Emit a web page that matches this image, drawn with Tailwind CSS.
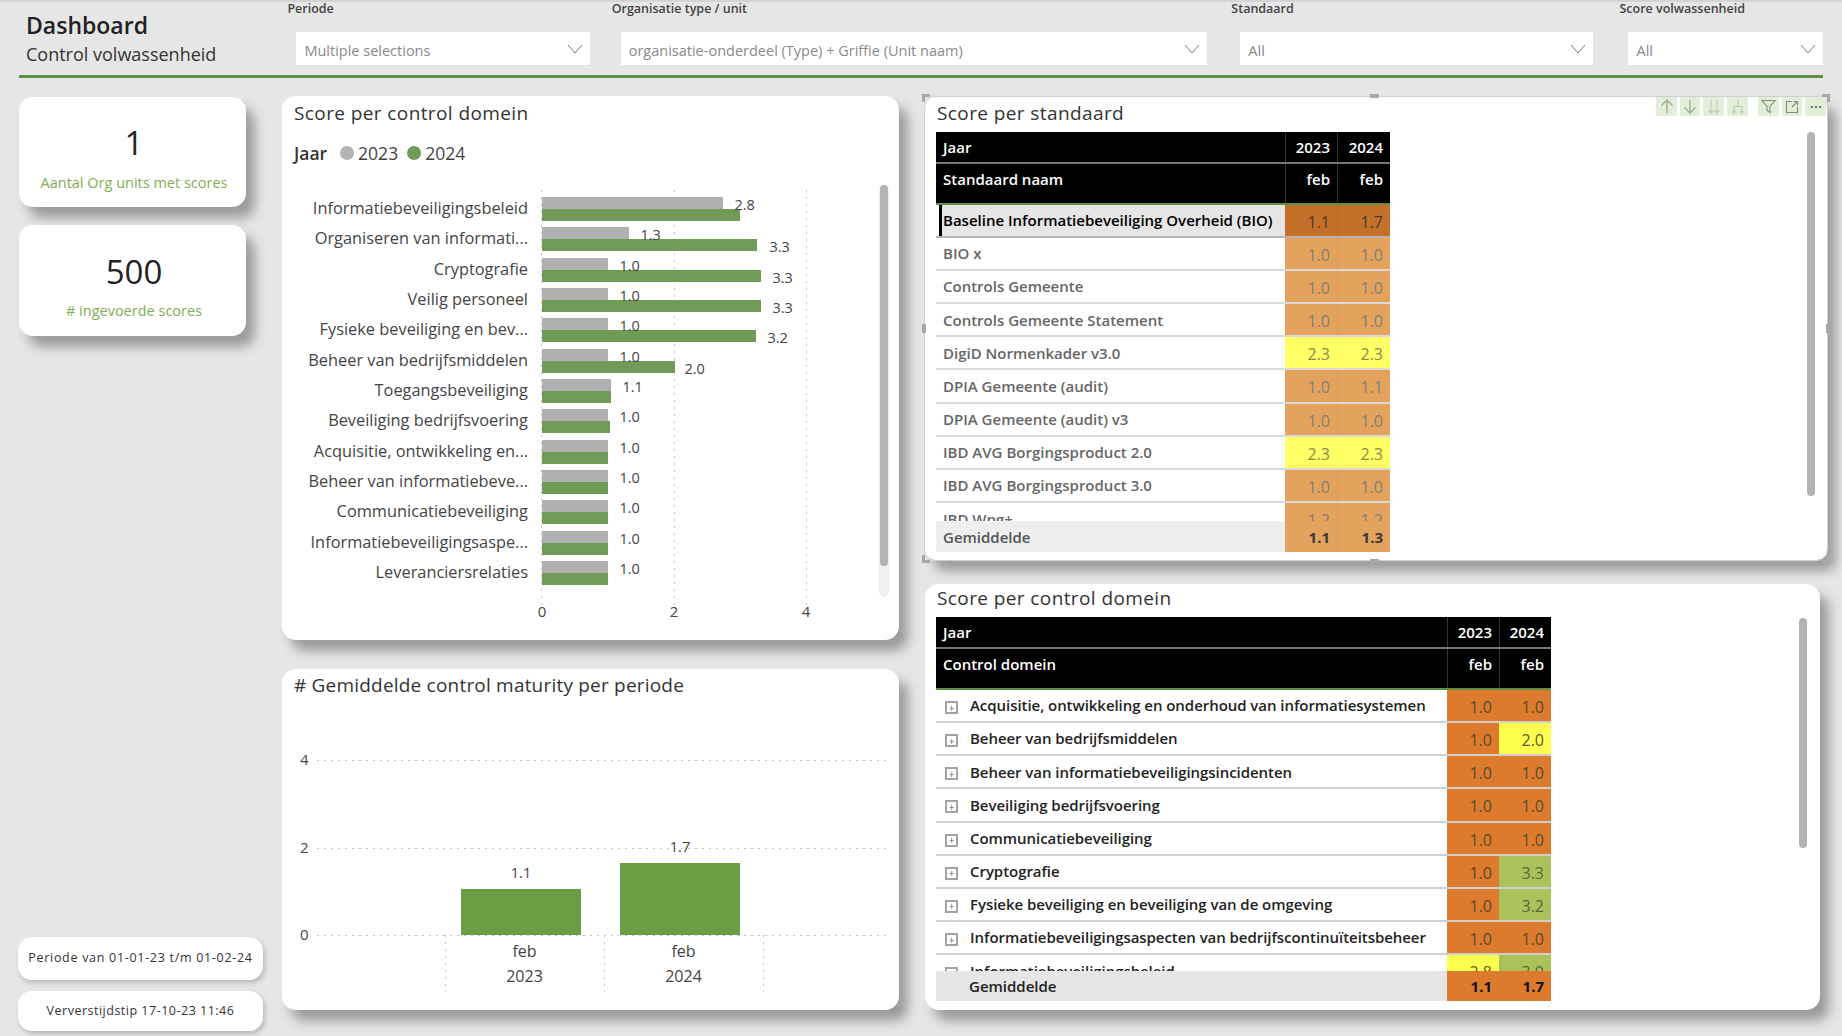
<!DOCTYPE html>
<html lang="nl">
<head>
<meta charset="utf-8">
<title>Dashboard Control volwassenheid</title>
<script src="https://cdn.jsdelivr.net/npm/@tailwindcss/browser@4"></script>
</head>
<body class="w-[1842px] h-[1036px] overflow-hidden bg-[#e6e6e6] shadow-[inset_0_2px_0_#d4d4d4] font-['Open_Sans',sans-serif] text-[#333]">

<!-- header -->
<header class="h-[78px] mx-[19px] border-b-[3px] border-[#5f8f45] flex relative">
  <div class="w-[269px] pl-[7px] pt-[11px]">
    <div class="text-[23px] leading-[28px] font-semibold text-[#222]">Dashboard</div>
    <div class="mt-[2px] text-[18px] leading-[26px] text-[#333]">Control volwassenheid</div>
  </div>
  <div class="w-[303px] flex flex-col">
    <div class="text-[12.5px] leading-[18px] font-semibold text-[#444]">Periode</div>
    <div class="mt-[14px] ml-[9px] h-[33px] bg-white flex items-center justify-between pl-[8px] pr-[7px] text-[14.5px] text-[#8a8a8a]"><span class="pt-[5px]">Multiple selections</span>
      <svg class="w-[16px] h-[10px]" viewBox="0 0 16 10" fill="none" stroke="#777" stroke-width="1"><path d="M1 1l7 8 7-8"/></svg></div>
  </div>
  <div class="w-[597px] ml-[22px] flex flex-col">
    <div class="text-[12.5px] leading-[18px] font-semibold text-[#444]">Organisatie type / unit</div>
    <div class="mt-[14px] ml-[9px] h-[33px] bg-white flex items-center justify-between pl-[8px] pr-[7px] text-[14.5px] text-[#8a8a8a]"><span class="pt-[5px]">organisatie-onderdeel (Type) + Griffie (Unit naam)</span>
      <svg class="w-[16px] h-[10px]" viewBox="0 0 16 10" fill="none" stroke="#777" stroke-width="1"><path d="M1 1l7 8 7-8"/></svg></div>
  </div>
  <div class="w-[363px] ml-[24px] flex flex-col">
    <div class="text-[12.5px] leading-[18px] font-semibold text-[#444]">Standaard</div>
    <div class="mt-[14px] ml-[9px] h-[33px] bg-white flex items-center justify-between pl-[8px] pr-[7px] text-[14.5px] text-[#8a8a8a]"><span class="pt-[5px]">All</span>
      <svg class="w-[16px] h-[10px]" viewBox="0 0 16 10" fill="none" stroke="#777" stroke-width="1"><path d="M1 1l7 8 7-8"/></svg></div>
  </div>
  <div class="w-[204px] ml-[26px] flex flex-col">
    <div class="text-[12.5px] leading-[18px] font-semibold text-[#444] whitespace-nowrap">Score volwassenheid</div>
    <div class="mt-[14px] ml-[9px] h-[33px] bg-white flex items-center justify-between pl-[8px] pr-[7px] text-[14.5px] text-[#8a8a8a]"><span class="pt-[5px]">All</span>
      <svg class="w-[16px] h-[10px]" viewBox="0 0 16 10" fill="none" stroke="#777" stroke-width="1"><path d="M1 1l7 8 7-8"/></svg></div>
  </div>
</header>

<main class="flex pt-[18px] h-[958px]">

  <!-- left column -->
  <div class="ml-[18px] w-[245px] flex flex-col pb-[5px]">
    <div class="mt-[1px] ml-[1px] w-[227px] h-[110px] bg-white rounded-[14px] shadow-[9px_11px_12px_rgba(0,0,0,0.33)] flex flex-col items-center pt-[24px] pl-[3px]">
      <div class="text-[33px] leading-[44px] font-medium text-[#222]">1</div>
      <div class="mt-[8px] text-[14.5px] leading-[20px] text-[#7fae55]">Aantal Org units met scores</div>
    </div>
    <div class="mt-[18px] ml-[1px] w-[227px] h-[111px] bg-white rounded-[14px] shadow-[9px_11px_12px_rgba(0,0,0,0.33)] flex flex-col items-center pt-[25px] pl-[3px]">
      <div class="text-[33px] leading-[44px] font-medium text-[#222]">500</div>
      <div class="mt-[7px] text-[14.5px] leading-[20px] text-[#7fae55]"># ingevoerde scores</div>
    </div>
    <div class="mt-auto h-[43px] bg-white rounded-[14px] shadow-[2px_3px_5px_rgba(0,0,0,0.2)] flex items-center justify-center text-[12.5px] tracking-[0.7px] text-[#333] whitespace-nowrap">Periode van 01-01-23 t/m 01-02-24</div>
    <div class="mt-[11px] h-[40px] bg-white rounded-[14px] shadow-[2px_3px_5px_rgba(0,0,0,0.2)] flex items-center justify-center text-[12.5px] tracking-[0.5px] text-[#333]">Ververstijdstip 17-10-23 11:46</div>
  </div>

  <!-- middle column -->
  <div class="ml-[19px] w-[617px] flex flex-col">
    <section class="relative h-[544px] bg-white rounded-[14px] shadow-[9px_11px_12px_rgba(0,0,0,0.33)]">
      <h2 class="pl-[12px] pt-[4px] text-[19px] leading-[26px] tracking-[0.4px] text-[#333]">Score per control domein</h2>
      <div class="mt-[14px] pl-[12px] flex items-center h-[26px] text-[17.5px] text-[#444]">
        <span class="font-semibold text-[#333]">Jaar</span>
        <span class="ml-[13px] w-[14px] h-[14px] rounded-full bg-[#b3b3b3]"></span><span class="ml-[4px]">2023</span>
        <span class="ml-[9px] w-[14px] h-[14px] rounded-full bg-[#6f9b57]"></span><span class="ml-[4px]">2024</span>
      </div>

      <div class="absolute left-[259px] top-[94px] h-[420px] w-[1px] bg-[repeating-linear-gradient(to_bottom,#c4c4c4_0,#c4c4c4_2px,transparent_2px,transparent_7px)]"></div>
      <div class="absolute left-[392px] top-[94px] h-[420px] w-[1px] bg-[repeating-linear-gradient(to_bottom,#c4c4c4_0,#c4c4c4_2px,transparent_2px,transparent_7px)]"></div>
      <div class="absolute left-[524px] top-[94px] h-[420px] w-[1px] bg-[repeating-linear-gradient(to_bottom,#c4c4c4_0,#c4c4c4_2px,transparent_2px,transparent_7px)]"></div>

      <div class="relative mt-[27px] text-[16.35px] text-[#444]">
        <div class="h-[30.35px] flex items-center"><div class="w-[246px] text-right whitespace-nowrap">Informatiebeveiligingsbeleid</div>
          <div class="relative self-start mt-[4px] ml-[13.5px] h-[23px] w-[300px]"><div class="h-[12px] w-[181px] bg-[#b0b0b0]"></div><div class="h-[12px] w-[198px] bg-[#6f9b57]"></div><span class="absolute left-[193px] top-[-3px] text-[14.5px]">2.8</span></div></div>
        <div class="h-[30.35px] flex items-center"><div class="w-[246px] text-right whitespace-nowrap">Organiseren van informati...</div>
          <div class="relative self-start mt-[4px] ml-[13.5px] h-[23px] w-[300px]"><div class="h-[12px] w-[87px] bg-[#b0b0b0]"></div><div class="h-[12px] w-[215px] bg-[#6f9b57]"></div><span class="absolute left-[99px] top-[-3px] text-[14.5px]">1.3</span><span class="absolute left-[228px] top-[9px] text-[14.5px]">3.3</span></div></div>
        <div class="h-[30.35px] flex items-center"><div class="w-[246px] text-right whitespace-nowrap">Cryptografie</div>
          <div class="relative self-start mt-[4px] ml-[13.5px] h-[23px] w-[300px]"><div class="h-[12px] w-[66px] bg-[#b0b0b0]"></div><div class="h-[12px] w-[219px] bg-[#6f9b57]"></div><span class="absolute left-[78px] top-[-3px] text-[14.5px]">1.0</span><span class="absolute left-[231px] top-[9px] text-[14.5px]">3.3</span></div></div>
        <div class="h-[30.35px] flex items-center"><div class="w-[246px] text-right whitespace-nowrap">Veilig personeel</div>
          <div class="relative self-start mt-[4px] ml-[13.5px] h-[23px] w-[300px]"><div class="h-[12px] w-[66px] bg-[#b0b0b0]"></div><div class="h-[12px] w-[219px] bg-[#6f9b57]"></div><span class="absolute left-[78px] top-[-3px] text-[14.5px]">1.0</span><span class="absolute left-[231px] top-[9px] text-[14.5px]">3.3</span></div></div>
        <div class="h-[30.35px] flex items-center"><div class="w-[246px] text-right whitespace-nowrap">Fysieke beveiliging en bev...</div>
          <div class="relative self-start mt-[4px] ml-[13.5px] h-[23px] w-[300px]"><div class="h-[12px] w-[66px] bg-[#b0b0b0]"></div><div class="h-[12px] w-[214px] bg-[#6f9b57]"></div><span class="absolute left-[78px] top-[-3px] text-[14.5px]">1.0</span><span class="absolute left-[226px] top-[9px] text-[14.5px]">3.2</span></div></div>
        <div class="h-[30.35px] flex items-center"><div class="w-[246px] text-right whitespace-nowrap">Beheer van bedrijfsmiddelen</div>
          <div class="relative self-start mt-[4px] ml-[13.5px] h-[23px] w-[300px]"><div class="h-[12px] w-[66px] bg-[#b0b0b0]"></div><div class="h-[12px] w-[133px] bg-[#6f9b57]"></div><span class="absolute left-[78px] top-[-3px] text-[14.5px]">1.0</span><span class="absolute left-[143px] top-[9px] text-[14.5px]">2.0</span></div></div>
        <div class="h-[30.35px] flex items-center"><div class="w-[246px] text-right whitespace-nowrap">Toegangsbeveiliging</div>
          <div class="relative self-start mt-[4px] ml-[13.5px] h-[23px] w-[300px]"><div class="h-[12px] w-[69px] bg-[#b0b0b0]"></div><div class="h-[12px] w-[69px] bg-[#6f9b57]"></div><span class="absolute left-[81px] top-[-3px] text-[14.5px]">1.1</span></div></div>
        <div class="h-[30.35px] flex items-center"><div class="w-[246px] text-right whitespace-nowrap">Beveiliging bedrijfsvoering</div>
          <div class="relative self-start mt-[4px] ml-[13.5px] h-[23px] w-[300px]"><div class="h-[12px] w-[66px] bg-[#b0b0b0]"></div><div class="h-[12px] w-[68px] bg-[#6f9b57]"></div><span class="absolute left-[78px] top-[-3px] text-[14.5px]">1.0</span></div></div>
        <div class="h-[30.35px] flex items-center"><div class="w-[246px] text-right whitespace-nowrap">Acquisitie, ontwikkeling en...</div>
          <div class="relative self-start mt-[4px] ml-[13.5px] h-[23px] w-[300px]"><div class="h-[12px] w-[66px] bg-[#b0b0b0]"></div><div class="h-[12px] w-[66px] bg-[#6f9b57]"></div><span class="absolute left-[78px] top-[-3px] text-[14.5px]">1.0</span></div></div>
        <div class="h-[30.35px] flex items-center"><div class="w-[246px] text-right whitespace-nowrap">Beheer van informatiebeve...</div>
          <div class="relative self-start mt-[4px] ml-[13.5px] h-[23px] w-[300px]"><div class="h-[12px] w-[66px] bg-[#b0b0b0]"></div><div class="h-[12px] w-[66px] bg-[#6f9b57]"></div><span class="absolute left-[78px] top-[-3px] text-[14.5px]">1.0</span></div></div>
        <div class="h-[30.35px] flex items-center"><div class="w-[246px] text-right whitespace-nowrap">Communicatiebeveiliging</div>
          <div class="relative self-start mt-[4px] ml-[13.5px] h-[23px] w-[300px]"><div class="h-[12px] w-[66px] bg-[#b0b0b0]"></div><div class="h-[12px] w-[66px] bg-[#6f9b57]"></div><span class="absolute left-[78px] top-[-3px] text-[14.5px]">1.0</span></div></div>
        <div class="h-[30.35px] flex items-center"><div class="w-[246px] text-right whitespace-nowrap">Informatiebeveiligingsaspe...</div>
          <div class="relative self-start mt-[4px] ml-[13.5px] h-[23px] w-[300px]"><div class="h-[12px] w-[66px] bg-[#b0b0b0]"></div><div class="h-[12px] w-[66px] bg-[#6f9b57]"></div><span class="absolute left-[78px] top-[-3px] text-[14.5px]">1.0</span></div></div>
        <div class="h-[30.35px] flex items-center"><div class="w-[246px] text-right whitespace-nowrap">Leveranciersrelaties</div>
          <div class="relative self-start mt-[4px] ml-[13.5px] h-[23px] w-[300px]"><div class="h-[12px] w-[66px] bg-[#b0b0b0]"></div><div class="h-[12px] w-[66px] bg-[#6f9b57]"></div><span class="absolute left-[78px] top-[-3px] text-[14.5px]">1.0</span></div></div>
      </div>

      <div class="absolute left-[254px] top-[504px] w-[12px] text-center text-[15px] text-[#444]">0</div>
      <div class="absolute left-[386px] top-[504px] w-[12px] text-center text-[15px] text-[#444]">2</div>
      <div class="absolute left-[518px] top-[504px] w-[12px] text-center text-[15px] text-[#444]">4</div>

      <div class="absolute left-[597px] top-[89px] w-[10px] h-[412px] rounded-full bg-[#f0f0f0]">
        <div class="h-[381px] rounded-full bg-[#b3b3b3] w-[8px] mx-auto"></div>
      </div>
    </section>

    <section class="relative mt-[29px] h-[341px] bg-white rounded-[14px] shadow-[9px_11px_12px_rgba(0,0,0,0.33)]">
      <h2 class="pl-[12px] pt-[3px] text-[19px] leading-[26px] tracking-[0.2px] text-[#333]"># Gemiddelde control maturity per periode</h2>

      <div class="absolute left-[18px] top-[79px] text-[15px] text-[#444]">4</div>
      <div class="absolute left-[18px] top-[167px] text-[15px] text-[#444]">2</div>
      <div class="absolute left-[18px] top-[254px] text-[15px] text-[#444]">0</div>
      <div class="absolute left-[35px] right-[9px] top-[91px] h-[1px] bg-[repeating-linear-gradient(to_right,#c4c4c4_0,#c4c4c4_2px,transparent_2px,transparent_7px)]"></div>
      <div class="absolute left-[35px] right-[9px] top-[179px] h-[1px] bg-[repeating-linear-gradient(to_right,#c4c4c4_0,#c4c4c4_2px,transparent_2px,transparent_7px)]"></div>
      <div class="absolute left-[35px] right-[9px] top-[266px] h-[1px] bg-[repeating-linear-gradient(to_right,#c4c4c4_0,#c4c4c4_2px,transparent_2px,transparent_7px)]"></div>
      <div class="absolute left-[163px] top-[266px] h-[57px] w-[1px] bg-[repeating-linear-gradient(to_bottom,#c4c4c4_0,#c4c4c4_2px,transparent_2px,transparent_7px)]"></div>
      <div class="absolute left-[322px] top-[266px] h-[57px] w-[1px] bg-[repeating-linear-gradient(to_bottom,#c4c4c4_0,#c4c4c4_2px,transparent_2px,transparent_7px)]"></div>
      <div class="absolute left-[481px] top-[266px] h-[57px] w-[1px] bg-[repeating-linear-gradient(to_bottom,#c4c4c4_0,#c4c4c4_2px,transparent_2px,transparent_7px)]"></div>

      <div class="absolute left-[179px] top-[165px] h-[101px] flex items-end gap-[39px] text-center text-[14.5px] text-[#444]">
        <div class="w-[120px]"><div class="leading-[20px] mb-[6px]">1.1</div><div class="h-[46px] bg-[#699e45]"></div></div>
        <div class="w-[120px]"><div class="leading-[20px] mb-[6px]">1.7</div><div class="h-[72px] bg-[#699e45]"></div></div>
      </div>

      <div class="absolute left-[163px] top-[270px] flex text-center text-[16px] leading-[25px] text-[#444]">
        <div class="w-[159px]">feb<br>2023</div>
        <div class="w-[159px]">feb<br>2024</div>
      </div>
    </section>
  </div>

  <!-- right column -->
  <div class="ml-[26px] w-[902px] flex flex-col">
    <section class="relative mt-[1px] h-[463px] bg-white rounded-[10px] shadow-[9px_11px_12px_rgba(0,0,0,0.33)] outline outline-[#d0d0d0]">
      <span class="absolute left-[-3px] top-[-3px] w-[8px] h-[8px] border-l-[3px] border-t-[3px] border-[#a8a8a8]"></span>
      <span class="absolute right-[-3px] top-[-3px] w-[8px] h-[8px] border-r-[3px] border-t-[3px] border-[#a8a8a8]"></span>
      <span class="absolute left-[-3px] bottom-[-3px] w-[8px] h-[8px] border-l-[3px] border-b-[3px] border-[#a8a8a8]"></span>
      <span class="absolute right-[-3px] bottom-[-3px] w-[8px] h-[8px] border-r-[3px] border-b-[3px] border-[#a8a8a8]"></span>
      <span class="absolute left-[445px] top-[-3px] w-[9px] h-[4px] bg-[#a8a8a8]"></span>
      <span class="absolute left-[445px] bottom-[-3px] w-[9px] h-[4px] bg-[#a8a8a8]"></span>
      <span class="absolute left-[-3px] top-[227px] w-[4px] h-[9px] bg-[#a8a8a8]"></span>
      <span class="absolute right-[-3px] top-[227px] w-[4px] h-[9px] bg-[#a8a8a8]"></span>

      <!-- visual toolbar -->
      <div class="absolute right-[1px] top-0 flex h-[19px]">
        <span class="w-[21px] mr-[3px] bg-[#e2eed9] flex items-center justify-center"><svg class="w-[14px] h-[15px]" viewBox="0 0 14 15" fill="none" stroke="#9aae8e" stroke-width="1.3"><path d="M7 14V1M1.5 6.5L7 1l5.5 5.5"/></svg></span>
        <span class="w-[20px] mr-[3px] bg-[#e2eed9] flex items-center justify-center"><svg class="w-[14px] h-[15px]" viewBox="0 0 14 15" fill="none" stroke="#9aae8e" stroke-width="1.3"><path d="M7 1v13M1.5 8.5L7 14l5.5-5.5"/></svg></span>
        <span class="w-[21px] mr-[3px] bg-[#e2eed9] flex items-center justify-center"><svg class="w-[14px] h-[15px]" viewBox="0 0 14 15" fill="none" stroke="#bccdb2" stroke-width="1.2"><path d="M4 1v13M1.5 11.5L4 14l2.5-2.5M10 1v13M7.5 11.5L10 14l2.5-2.5"/></svg></span>
        <span class="w-[21px] mr-[10px] bg-[#e2eed9] flex items-center justify-center"><svg class="w-[14px] h-[15px]" viewBox="0 0 14 15" fill="none" stroke="#bccdb2" stroke-width="1.2"><path d="M7 1v6M3 14V7.5h8V14M1.5 12L3 14l1.5-2M9.5 12l1.5 2 1.5-2"/></svg></span>
        <span class="w-[21px] mr-[3px] bg-[#e2eed9] flex items-center justify-center"><svg class="w-[15px] h-[15px]" viewBox="0 0 15 15" fill="none" stroke="#808c78" stroke-width="1.1"><path d="M1 1.5h13L9 7.5v6l-3-2v-4z"/></svg></span>
        <span class="w-[20px] mr-[3px] bg-[#e2eed9] flex items-center justify-center"><svg class="w-[14px] h-[14px]" viewBox="0 0 14 14" fill="none" stroke="#808c78" stroke-width="1.1"><path d="M7 1.5H1.5v11h11V7M8.5 1.5h4v4M12.5 1.5L7 7"/></svg></span>
        <span class="w-[21px] bg-[#e2eed9] flex items-center justify-center gap-[2px]"><i class="w-[2px] h-[2px] bg-[#6f7a68]"></i><i class="w-[2px] h-[2px] bg-[#6f7a68]"></i><i class="w-[2px] h-[2px] bg-[#6f7a68]"></i></span>
      </div>

      <h2 class="pl-[12px] pt-[3px] text-[19px] leading-[26px] tracking-[0.4px] text-[#333]">Score per standaard</h2>

      <div class="mt-[6px] ml-[11px] w-[454px] text-[15px]">
        <div class="flex h-[30px] bg-black text-white font-semibold items-center">
          <div class="w-[349px] pl-[7px]">Jaar</div>
          <div class="w-[52px] h-full flex items-center justify-end pr-[7px] border-l border-[#333]">2023</div>
          <div class="w-[53px] h-full flex items-center justify-end pr-[7px] border-l border-[#333]">2024</div>
        </div>
        <div class="h-[2px] bg-[#777]"></div>
        <div class="flex h-[41px] bg-black text-white font-semibold border-b-2 border-[#5f8f45]">
          <div class="w-[349px] pl-[7px] pt-[4px]">Standaard naam</div>
          <div class="w-[52px] pt-[4px] text-right pr-[7px] border-l border-[#333]">feb</div>
          <div class="w-[53px] pt-[4px] text-right pr-[7px] border-l border-[#333]">feb</div>
        </div>
        <div class="h-[316px] overflow-hidden text-[#666] font-semibold">
          <div class="flex h-[33.1px] border-b-2 border-[#b5b5b5]">
            <div class="w-[349px] bg-[#e6e6e6] border-l-[3px] border-black ml-[3px] pl-[1px] flex items-center text-black whitespace-nowrap">Baseline Informatiebeveiliging Overheid (BIO)</div>
            <div class="w-[52px] -ml-[3px] bg-[#c4702a] text-[#4a3a2a] font-normal text-[16px] text-right pr-[7px] pt-[5px]">1.1</div>
            <div class="w-[53px] bg-[#c4702a] text-[#4a3a2a] font-normal text-[16px] text-right pr-[7px] pt-[5px] border-l border-[#b86a2a]">1.7</div>
          </div>
          <div class="flex h-[33.1px] border-b-2 border-[#d9d9d9]"><div class="w-[349px] pl-[7px] flex items-center">BIO x</div><div class="w-[52px] bg-[#e3a35d] text-[#857f73] font-normal text-[16px] text-right pr-[7px] pt-[5px]">1.0</div><div class="w-[53px] bg-[#e3a35d] text-[#857f73] font-normal text-[16px] text-right pr-[7px] pt-[5px] border-l border-[#d99a58]">1.0</div></div>
          <div class="flex h-[33.1px] border-b-2 border-[#d9d9d9]"><div class="w-[349px] pl-[7px] flex items-center">Controls Gemeente</div><div class="w-[52px] bg-[#e3a35d] text-[#857f73] font-normal text-[16px] text-right pr-[7px] pt-[5px]">1.0</div><div class="w-[53px] bg-[#e3a35d] text-[#857f73] font-normal text-[16px] text-right pr-[7px] pt-[5px] border-l border-[#d99a58]">1.0</div></div>
          <div class="flex h-[33.1px] border-b-2 border-[#d9d9d9]"><div class="w-[349px] pl-[7px] flex items-center">Controls Gemeente Statement</div><div class="w-[52px] bg-[#e3a35d] text-[#857f73] font-normal text-[16px] text-right pr-[7px] pt-[5px]">1.0</div><div class="w-[53px] bg-[#e3a35d] text-[#857f73] font-normal text-[16px] text-right pr-[7px] pt-[5px] border-l border-[#d99a58]">1.0</div></div>
          <div class="flex h-[33.1px] border-b-2 border-[#d9d9d9]"><div class="w-[349px] pl-[7px] flex items-center">DigiD Normenkader v3.0</div><div class="w-[52px] bg-[#ffff66] text-[#8c8c4a] font-normal text-[16px] text-right pr-[7px] pt-[5px]">2.3</div><div class="w-[53px] bg-[#ffff66] text-[#8c8c4a] font-normal text-[16px] text-right pr-[7px] pt-[5px]">2.3</div></div>
          <div class="flex h-[33.1px] border-b-2 border-[#d9d9d9]"><div class="w-[349px] pl-[7px] flex items-center">DPIA Gemeente (audit)</div><div class="w-[52px] bg-[#e3a35d] text-[#857f73] font-normal text-[16px] text-right pr-[7px] pt-[5px]">1.0</div><div class="w-[53px] bg-[#e3a35d] text-[#857f73] font-normal text-[16px] text-right pr-[7px] pt-[5px] border-l border-[#d99a58]">1.1</div></div>
          <div class="flex h-[33.1px] border-b-2 border-[#d9d9d9]"><div class="w-[349px] pl-[7px] flex items-center">DPIA Gemeente (audit) v3</div><div class="w-[52px] bg-[#e3a35d] text-[#857f73] font-normal text-[16px] text-right pr-[7px] pt-[5px]">1.0</div><div class="w-[53px] bg-[#e3a35d] text-[#857f73] font-normal text-[16px] text-right pr-[7px] pt-[5px] border-l border-[#d99a58]">1.0</div></div>
          <div class="flex h-[33.1px] border-b-2 border-[#d9d9d9]"><div class="w-[349px] pl-[7px] flex items-center">IBD AVG Borgingsproduct 2.0</div><div class="w-[52px] bg-[#ffff66] text-[#8c8c4a] font-normal text-[16px] text-right pr-[7px] pt-[5px]">2.3</div><div class="w-[53px] bg-[#ffff66] text-[#8c8c4a] font-normal text-[16px] text-right pr-[7px] pt-[5px]">2.3</div></div>
          <div class="flex h-[33.1px] border-b-2 border-[#d9d9d9]"><div class="w-[349px] pl-[7px] flex items-center">IBD AVG Borgingsproduct 3.0</div><div class="w-[52px] bg-[#e3a35d] text-[#857f73] font-normal text-[16px] text-right pr-[7px] pt-[5px]">1.0</div><div class="w-[53px] bg-[#e3a35d] text-[#857f73] font-normal text-[16px] text-right pr-[7px] pt-[5px] border-l border-[#d99a58]">1.0</div></div>
          <div class="flex h-[33.1px]"><div class="w-[349px] pl-[7px] flex items-center">IBD Wpg+</div><div class="w-[52px] bg-[#e3a35d] text-[#857f73] font-normal text-[16px] text-right pr-[7px] pt-[5px]">1.2</div><div class="w-[53px] bg-[#e3a35d] text-[#857f73] font-normal text-[16px] text-right pr-[7px] pt-[5px] border-l border-[#d99a58]">1.2</div></div>
        </div>
        <div class="flex h-[31px] font-semibold items-stretch">
          <div class="w-[349px] pl-[7px] pt-[1px] bg-[#eeeeee] text-[#555] flex items-center">Gemiddelde</div>
          <div class="w-[52px] bg-[#e3a35d] text-[#3a3a3a] font-bold text-right pr-[7px] pt-[1px] flex items-center justify-end">1.1</div>
          <div class="w-[53px] bg-[#e3a35d] text-[#3a3a3a] font-bold text-right pr-[7px] pt-[1px] flex items-center justify-end border-l border-[#d99a58]">1.3</div>
        </div>
      </div>

      <div class="absolute left-[882px] top-[35px] w-[8px] h-[364px] rounded-full bg-[#b3b3b3]"></div>
    </section>

    <section class="relative mt-[24px] w-[895px] h-[426px] bg-white rounded-[14px] shadow-[9px_11px_12px_rgba(0,0,0,0.33)]">
      <h2 class="pl-[12px] pt-[1px] text-[19px] leading-[26px] tracking-[0.4px] text-[#333]">Score per control domein</h2>

      <div class="mt-[6px] ml-[11px] w-[615px] text-[15px]">
        <div class="flex h-[30px] bg-black text-white font-semibold items-center">
          <div class="w-[511px] pl-[7px]">Jaar</div>
          <div class="w-[52px] h-full flex items-center justify-end pr-[7px] border-l border-[#333]">2023</div>
          <div class="w-[52px] h-full flex items-center justify-end pr-[7px] border-l border-[#333]">2024</div>
        </div>
        <div class="h-[2px] bg-[#777]"></div>
        <div class="flex h-[41px] bg-black text-white font-semibold border-b-2 border-[#5f8f45]">
          <div class="w-[511px] pl-[7px] pt-[4px]">Control domein</div>
          <div class="w-[52px] pt-[4px] text-right pr-[7px] border-l border-[#333]">feb</div>
          <div class="w-[52px] pt-[4px] text-right pr-[7px] border-l border-[#333]">feb</div>
        </div>
        <div class="h-[281px] overflow-hidden text-[#222] font-semibold">
          <div class="flex h-[33.15px] border-b-2 border-[#cfcfcf]"><div class="w-[511px] pl-[9px] flex items-center gap-[12px] whitespace-nowrap tracking-[-0.05px]"><span class="w-[13px] h-[13px] mt-[4px] border-2 border-[#a3a3a3] flex items-center justify-center text-[10px] leading-none font-normal text-[#666]">+</span>Acquisitie, ontwikkeling en onderhoud van informatiesystemen</div><div class="w-[52px] bg-[#dc7b2e] text-[#5a4a2a] font-normal text-[16px] text-right pr-[7px] pt-[5px]">1.0</div><div class="w-[52px] bg-[#dc7b2e] text-[#5a4a2a] font-normal text-[16px] text-right pr-[7px] pt-[5px]">1.0</div></div>
          <div class="flex h-[33.15px] border-b-2 border-[#cfcfcf]"><div class="w-[511px] pl-[9px] flex items-center gap-[12px] whitespace-nowrap tracking-[-0.05px]"><span class="w-[13px] h-[13px] mt-[4px] border-2 border-[#a3a3a3] flex items-center justify-center text-[10px] leading-none font-normal text-[#666]">+</span>Beheer van bedrijfsmiddelen</div><div class="w-[52px] bg-[#dc7b2e] text-[#5a4a2a] font-normal text-[16px] text-right pr-[7px] pt-[5px]">1.0</div><div class="w-[52px] bg-[#ffff4d] text-[#5a5a2a] font-normal text-[16px] text-right pr-[7px] pt-[5px]">2.0</div></div>
          <div class="flex h-[33.15px] border-b-2 border-[#cfcfcf]"><div class="w-[511px] pl-[9px] flex items-center gap-[12px] whitespace-nowrap tracking-[-0.05px]"><span class="w-[13px] h-[13px] mt-[4px] border-2 border-[#a3a3a3] flex items-center justify-center text-[10px] leading-none font-normal text-[#666]">+</span>Beheer van informatiebeveiligingsincidenten</div><div class="w-[52px] bg-[#dc7b2e] text-[#5a4a2a] font-normal text-[16px] text-right pr-[7px] pt-[5px]">1.0</div><div class="w-[52px] bg-[#dc7b2e] text-[#5a4a2a] font-normal text-[16px] text-right pr-[7px] pt-[5px]">1.0</div></div>
          <div class="flex h-[33.15px] border-b-2 border-[#cfcfcf]"><div class="w-[511px] pl-[9px] flex items-center gap-[12px] whitespace-nowrap tracking-[-0.05px]"><span class="w-[13px] h-[13px] mt-[4px] border-2 border-[#a3a3a3] flex items-center justify-center text-[10px] leading-none font-normal text-[#666]">+</span>Beveiliging bedrijfsvoering</div><div class="w-[52px] bg-[#dc7b2e] text-[#5a4a2a] font-normal text-[16px] text-right pr-[7px] pt-[5px]">1.0</div><div class="w-[52px] bg-[#dc7b2e] text-[#5a4a2a] font-normal text-[16px] text-right pr-[7px] pt-[5px]">1.0</div></div>
          <div class="flex h-[33.15px] border-b-2 border-[#cfcfcf]"><div class="w-[511px] pl-[9px] flex items-center gap-[12px] whitespace-nowrap tracking-[-0.05px]"><span class="w-[13px] h-[13px] mt-[4px] border-2 border-[#a3a3a3] flex items-center justify-center text-[10px] leading-none font-normal text-[#666]">+</span>Communicatiebeveiliging</div><div class="w-[52px] bg-[#dc7b2e] text-[#5a4a2a] font-normal text-[16px] text-right pr-[7px] pt-[5px]">1.0</div><div class="w-[52px] bg-[#dc7b2e] text-[#5a4a2a] font-normal text-[16px] text-right pr-[7px] pt-[5px]">1.0</div></div>
          <div class="flex h-[33.15px] border-b-2 border-[#cfcfcf]"><div class="w-[511px] pl-[9px] flex items-center gap-[12px] whitespace-nowrap tracking-[-0.05px]"><span class="w-[13px] h-[13px] mt-[4px] border-2 border-[#a3a3a3] flex items-center justify-center text-[10px] leading-none font-normal text-[#666]">+</span>Cryptografie</div><div class="w-[52px] bg-[#dc7b2e] text-[#5a4a2a] font-normal text-[16px] text-right pr-[7px] pt-[5px]">1.0</div><div class="w-[52px] bg-[#adc15a] text-[#5a6a3a] font-normal text-[16px] text-right pr-[7px] pt-[5px]">3.3</div></div>
          <div class="flex h-[33.15px] border-b-2 border-[#cfcfcf]"><div class="w-[511px] pl-[9px] flex items-center gap-[12px] whitespace-nowrap tracking-[-0.05px]"><span class="w-[13px] h-[13px] mt-[4px] border-2 border-[#a3a3a3] flex items-center justify-center text-[10px] leading-none font-normal text-[#666]">+</span>Fysieke beveiliging en beveiliging van de omgeving</div><div class="w-[52px] bg-[#dc7b2e] text-[#5a4a2a] font-normal text-[16px] text-right pr-[7px] pt-[5px]">1.0</div><div class="w-[52px] bg-[#adc15a] text-[#5a6a3a] font-normal text-[16px] text-right pr-[7px] pt-[5px]">3.2</div></div>
          <div class="flex h-[33.15px] border-b-2 border-[#cfcfcf]"><div class="w-[511px] pl-[9px] flex items-center gap-[12px] whitespace-nowrap tracking-[-0.05px]"><span class="w-[13px] h-[13px] mt-[4px] border-2 border-[#a3a3a3] flex items-center justify-center text-[10px] leading-none font-normal text-[#666]">+</span>Informatiebeveiligingsaspecten van bedrijfscontinuïteitsbeheer</div><div class="w-[52px] bg-[#dc7b2e] text-[#5a4a2a] font-normal text-[16px] text-right pr-[7px] pt-[5px]">1.0</div><div class="w-[52px] bg-[#dc7b2e] text-[#5a4a2a] font-normal text-[16px] text-right pr-[7px] pt-[5px]">1.0</div></div>
          <div class="flex h-[33.15px]"><div class="w-[511px] pl-[9px] flex items-center gap-[12px] whitespace-nowrap tracking-[-0.05px]"><span class="w-[13px] h-[13px] mt-[4px] border-2 border-[#a3a3a3] flex items-center justify-center text-[10px] leading-none font-normal text-[#666]">+</span>Informatiebeveiligingsbeleid</div><div class="w-[52px] bg-[#ffff4d] text-[#5a5a2a] font-normal text-[16px] text-right pr-[7px] pt-[5px]">2.8</div><div class="w-[52px] bg-[#adc15a] text-[#5a6a3a] font-normal text-[16px] text-right pr-[7px] pt-[5px]">3.0</div></div>
        </div>
        <div class="flex h-[30px] font-semibold items-stretch">
          <div class="w-[511px] pl-[33px] bg-[#e6e6e6] text-[#222] flex items-center">Gemiddelde</div>
          <div class="w-[52px] bg-[#dc7b2e] text-[#111] font-bold pr-[7px] flex items-center justify-end">1.1</div>
          <div class="w-[52px] bg-[#dc7b2e] text-[#111] font-bold pr-[7px] flex items-center justify-end">1.7</div>
        </div>
      </div>

      <div class="absolute left-[874px] top-[34px] w-[8px] h-[230px] rounded-full bg-[#b3b3b3]"></div>
    </section>
  </div>
</main>
</body>
</html>
